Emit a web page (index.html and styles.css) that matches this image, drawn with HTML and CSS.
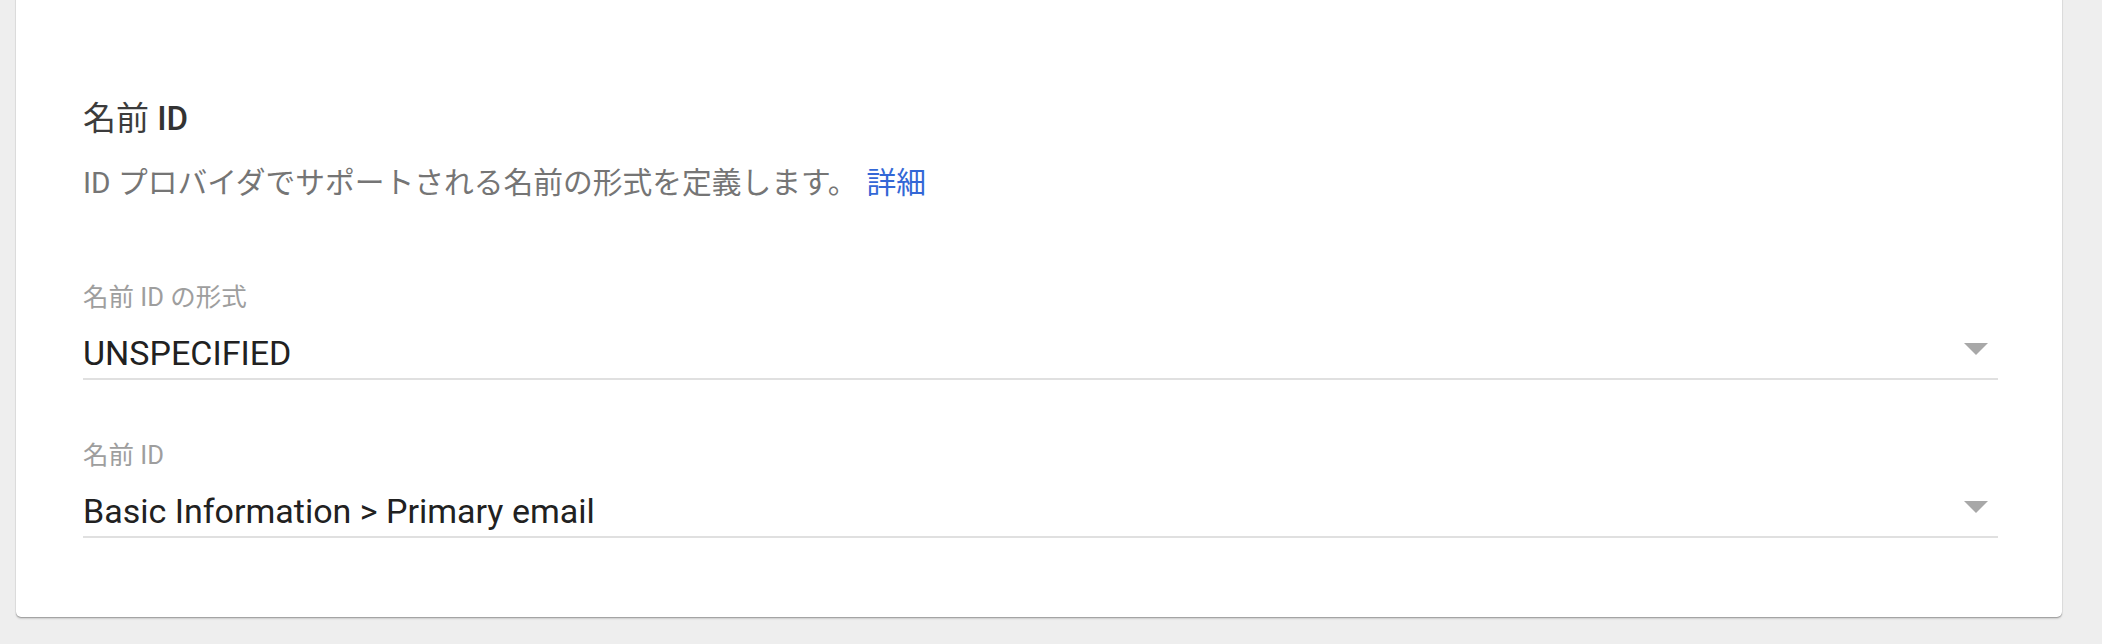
FILE: index.html
```html
<!DOCTYPE html>
<html lang="ja">
<head>
<meta charset="utf-8">
<title>名前 ID</title>
<link rel="stylesheet" href="styles.css">
</head>
<body>
<div class="page">
  <section class="card">
    <h2 class="title"><span class="title-ja">名前</span> ID</h2>
    <p class="desc">ID プロバイダでサポートされる名前の形式を定義します。<a class="link" href="#">詳細</a></p>

    <div class="field">
      <div class="label">名前 ID の形式</div>
      <div class="select">
        <span class="value">UNSPECIFIED</span>
        <span class="arrow"></span>
      </div>
    </div>

    <div class="field">
      <div class="label">名前 ID</div>
      <div class="select">
        <span class="value">Basic Information &gt; Primary email</span>
        <span class="arrow"></span>
      </div>
    </div>
  </section>
</div>
</body>
</html>
```

FILE: styles.css
```css
html, body {
  margin: 0;
  padding: 0;
}

body {
  background: #eeeeee;
  font-family: Roboto, "Noto Sans CJK JP", "Noto Sans", sans-serif;
  width: 2102px;
  height: 644px;
  overflow: hidden;
}

.page {
  padding: 0 40px 0 16px;
}

.card {
  margin-top: -10px;
  background: #ffffff;
  border-radius: 5px;
  box-shadow: 0 1px 1px rgba(0, 0, 0, 0.22), 0 2px 2px rgba(0, 0, 0, 0.12), 0 0 1px rgba(0, 0, 0, 0.25);
  padding: 109px 64px 79px 67px;
}

.title {
  margin: 0;
  font-size: 33px;
  line-height: 40px;
  font-weight: 500;
  color: #333333;
}

.title-ja {
  font-weight: 400;
  color: #3c3c3c;
}

.desc {
  margin: 24px 0 0;
  font-size: 29.75px;
  line-height: 40px;
  color: #757575;
}

.link {
  color: #3367d6;
  text-decoration: none;
  margin-left: 9px;
}

.field {
  margin-top: 78px;
}

.field + .field {
  margin-top: 59px;
}

.label {
  font-size: 25.5px;
  line-height: 32px;
  color: #9e9e9e;
}

.select {
  margin-top: 20px;
  display: flex;
  align-items: flex-start;
  justify-content: space-between;
  padding-bottom: 5px;
  border-bottom: 2px solid #e0e0e0;
}

.value {
  font-size: 34px;
  line-height: 40px;
  color: #212121;
}

.arrow {
  width: 0;
  height: 0;
  margin: 10px 10px 0 0;
  border-left: 12px solid transparent;
  border-right: 12px solid transparent;
  border-top: 12px solid #a8a8a8;
}
```
